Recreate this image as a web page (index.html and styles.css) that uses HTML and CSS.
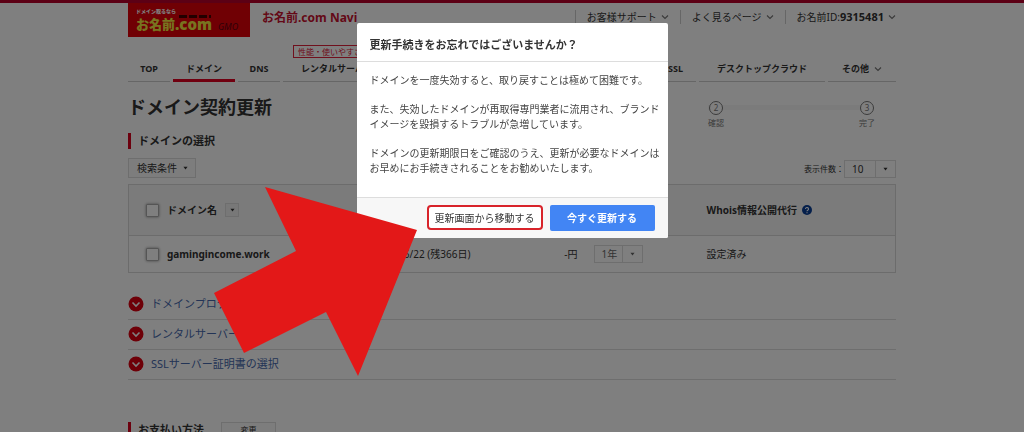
FILE: index.html
```html
<!DOCTYPE html>
<html lang="ja">
<head>
<meta charset="utf-8">
<title>お名前.com Navi</title>
<link rel="stylesheet" href="styles.css">
</head>
<body>
<svg class="sprite" width="0" height="0" aria-hidden="true">
  <symbol id="chevron" viewBox="0 0 8 6"><path d="M1 1.5 4 4.500 7 1.500" fill="none" stroke="currentColor" stroke-width="1.200"/></symbol>
  <symbol id="caret" viewBox="0 0 6 4"><path d="M.5.5h5L3 3.800z" fill="currentColor"/></symbol>
  <symbol id="disc" viewBox="0 0 16 16"><circle cx="8" cy="8" r="7.500" fill="#dc0010"/><path d="M4.500 6.500 8 10l3.500-3.500" fill="none" stroke="#fff" stroke-width="1.600"/></symbol>
</svg>

<div class="page">
  <header class="container header">
    <a class="logo" href="#">
      <span class="logo-tag">ドメイン取るなら</span>
      <span class="logo-row"><span class="logo-name">お名前</span><span class="logo-com">.com</span><span class="logo-gmo">GMO</span></span>
    </a>
    <span class="brand">お名前.com Navi</span>
    <div class="tools">
      <a href="#">お客様サポート<svg class="chevron"><use href="#chevron"/></svg></a>
      <a href="#">よく見るページ<svg class="chevron"><use href="#chevron"/></svg></a>
      <a href="#"><span>お名前ID:<b>9315481</b></span><svg class="chevron"><use href="#chevron"/></svg></a>
    </div>
  </header>

  <nav class="container nav">
    <a href="#">TOP</a>
    <a class="current" href="#">ドメイン</a>
    <a href="#">DNS</a>
    <a class="server" href="#"><span class="badge">性能・使いやすさ</span>レンタルサーバー</a>
    <a class="ssl" href="#">SSL</a>
    <a href="#">デスクトップクラウド</a>
    <a href="#">その他<svg class="chevron"><use href="#chevron"/></svg></a>
  </nav>

  <main class="container">
    <div class="title-row">
      <h1>ドメイン契約更新</h1>
      <ol class="steps">
        <li><span>2</span>確認</li>
        <li><span>3</span>完了</li>
      </ol>
    </div>

    <h2>ドメインの選択</h2>
    <div class="filter-row">
      <button class="filter" type="button">検索条件<svg class="caret"><use href="#caret"/></svg></button>
      <div class="count">
        <label for="count">表示件数：</label>
        <span class="select wide"><select id="count"><option>10</option></select><span class="arrow-cell"><svg class="caret"><use href="#caret"/></svg></span></span>
      </div>
    </div>

    <table>
      <colgroup><col class="c-name"><col class="c-date"><col class="c-price"><col class="c-term"><col></colgroup>
      <thead>
        <tr>
          <th><div class="cell"><input type="checkbox" aria-label="すべて選択">ドメイン名<button class="sort" type="button" aria-label="並べ替え"><svg class="caret"><use href="#caret"/></svg></button></div></th>
          <th></th><th></th><th></th>
          <th><div class="whois">Whois情報公開代行<svg class="help" viewBox="0 0 10 10"><circle cx="5" cy="5" r="5" fill="#0a3f96"/><path d="M3.500 4a1.500 1.500 0 1 1 2.200 1.300C5.200 5.600 5 5.800 5 6.300M5 7.200v1" fill="none" stroke="#fff" stroke-width="1.100"/></svg></div></th>
        </tr>
      </thead>
      <tbody>
        <tr>
          <td><div class="cell"><input type="checkbox" aria-label="gamingincome.workを選択"><b>gamingincome.work</b></div></td>
          <td>2020/06/22 (残366日)</td>
          <td class="price">-円</td>
          <td class="term"><span class="select"><select aria-label="更新年数"><option>1年</option></select><span class="arrow-cell"><svg class="caret"><use href="#caret"/></svg></span></span></td>
          <td>設定済み</td>
        </tr>
      </tbody>
    </table>

    <ul class="options">
      <li><a href="#"><svg class="disc"><use href="#disc"/></svg>ドメインプロテクション</a></li>
      <li><a href="#"><svg class="disc"><use href="#disc"/></svg>レンタルサーバーの選択</a></li>
      <li><a href="#"><svg class="disc"><use href="#disc"/></svg>SSLサーバー証明書の選択</a></li>
    </ul>

    <div class="payment">
      <h2>お支払い方法</h2>
      <button type="button">変更</button>
    </div>
  </main>
</div>

<div class="overlay">
  <section class="dialog" role="dialog" aria-modal="true" aria-labelledby="dialog-title">
    <h3 id="dialog-title">更新手続きをお忘れではございませんか？</h3>
    <div class="dialog-body">
      <p>ドメインを一度失効すると、取り戻すことは極めて困難です。</p>
      <p>また、失効したドメインが再取得専門業者に流用され、ブランド<br>イメージを毀損するトラブルが急増しています。</p>
      <p>ドメインの更新期限日をご確認のうえ、更新が必要なドメインは<br>お早めにお手続きされることをお勧めいたします。</p>
    </div>
    <footer>
      <button class="leave" type="button">更新画面から移動する</button>
      <button class="renew" type="button">今すぐ更新する</button>
    </footer>
  </section>
</div>

<svg class="pointer" viewBox="214 187 203 189" aria-hidden="true"><path d="M417 230 265 187l31 64-82 42 30 60 82-41 32 64z" fill="#e31818"/></svg>
</body>
</html>
```
FILE: styles.css
```css
* { box-sizing: border-box; }
body {
  margin: 0;
  height: 100vh;
  overflow: hidden;
  background: #fff;
  color: #333;
  font: 10px/16px "Noto Sans", "Noto Sans CJK JP", sans-serif;
}
a { color: inherit; text-decoration: none; }
button, select { font: inherit; color: inherit; }
h1, h2, h3, p, ul, ol { margin: 0; padding: 0; }
ul, ol { list-style: none; }
.sprite { position: absolute; }
.chevron { width: 8px; height: 6px; color: #777; }
.caret { width: 5px; height: 4px; }
.page { border-top: 3px solid #b8002a; }
.container { width: 75%; min-width: 768px; margin: 0 auto; }

/* header */
.header { display: flex; align-items: flex-start; height: 35px; }
.logo {
  display: flex;
  flex-direction: column;
  width: 122px;
  height: 34px;
  padding: 5px 8px 0;
  background: #e00008;
  font-weight: 900;
}
.logo-tag { color: #fff; font-size: 5px; line-height: 6px; }
.logo-row { display: flex; align-items: flex-end; line-height: 18px; white-space: nowrap; }
.logo-name { color: #f0e840; font-size: 13px; font-family: "Noto Sans CJK JP", sans-serif; }
.logo-com { padding-top: 1px; background: repeating-linear-gradient(90deg, #400 0 8px, transparent 8px 10px) 4px 1px / 32px 3px no-repeat; color: #f0e840; font-size: 15px; }
.logo-gmo { margin-left: 6px; color: #600010; font-size: 9px; line-height: 12px; font-style: italic; font-weight: 400; }
.brand { margin: 7px 0 0 12px; color: #c8102e; font-size: 12px; font-weight: 700; }
.tools { display: flex; margin: 7px 0 0 auto; }
.tools a { display: flex; align-items: center; gap: 4px; padding: 0 11px; border-left: 1px solid #ccc; line-height: 14px; }
.tools a:last-child { padding-right: 0; }
.tools b { font-size: 11px; }

/* navigation */
.nav {
  display: grid;
  grid-template-columns: 42px 62px 42px 118px 1fr 126px 68px;
  gap: 3px;
  height: 44px;
  align-items: end;
  font-size: 9px;
  font-weight: 700;
  text-align: center;
}
.nav a { display: block; height: 22px; border-bottom: 1px solid #ccc; line-height: 18px; }
.nav .current { border-bottom: 3px solid #e00020; }
.nav .server { height: 37px; padding-left: 18px; text-align: left; }
.nav .ssl { padding-right: 13px; text-align: right; }
.nav .chevron { margin-left: 5px; }
.badge { display: block; width: 90px; margin: 0 0 2px -8px; padding-left: 4px; border: 1px solid #e0203a; color: #e0203a; font-size: 8px; line-height: 11px; font-weight: 400; }

/* title and steps */
.title-row { display: flex; justify-content: space-between; padding-top: 15px; height: 51px; }
h1 { font-size: 18px; line-height: 20px; }
.steps { display: flex; justify-content: space-between; width: 188px; padding: 4px 21px 0 0; background: linear-gradient(#f6f6f6, #f6f6f6) 0 8px / 160px 5px no-repeat; color: #777; font-size: 8px; line-height: 10px; }
.steps li { display: flex; flex-direction: column; align-items: center; gap: 3px; }
.steps span { width: 14px; height: 14px; border: 1px solid #777; border-radius: 50%; background: #fff; line-height: 12px; text-align: center; }
h2 { padding-left: 7px; border-left: 3px solid #d8001c; font-size: 11px; line-height: 16px; }

/* filters */
.filter-row { display: flex; justify-content: space-between; align-items: flex-start; margin: 9px 0 6px; }
.filter { display: flex; align-items: center; gap: 6px; height: 20px; padding: 0 7px 0 8px; border: 1px solid #ddd; background: #fafafa; }
.count { display: flex; align-items: center; padding-top: 2px; font-size: 8px; }
.select { display: inline-flex; width: 49px; height: 18px; border: 1px solid #ddd; font-size: 10px; color: #666; }
.select.wide { width: 52px; color: #333; }
.select select { flex: 1; min-width: 0; padding: 0 0 0 7px; border: 0; background: none; appearance: none; }
.arrow-cell { display: flex; width: 20px; align-items: center; justify-content: center; border-left: 1px solid #ddd; }

/* table */
table { width: 100%; border: 1px solid #d8d8d8; border-collapse: collapse; table-layout: fixed; }
.c-name { width: 243px; }
.c-date { width: 140px; }
.c-price { width: 66px; }
.c-term { width: 129px; }
tr { border-bottom: 1px solid #d8d8d8; }
th, td { padding: 0; text-align: left; }
th { height: 51px; background: #f7f7f7; }
td { height: 37px; }
.cell { display: flex; align-items: center; padding-left: 17px; }
.cell input { width: 13px; height: 13px; margin: 0 8px 0 0; border: 1px solid #aaa; border-radius: 1px; background: #fff; box-shadow: 0 0 3px #888; appearance: none; }
.sort { display: flex; align-items: center; justify-content: center; width: 14px; height: 14px; margin-left: 8px; padding: 0; border: 1px solid #ddd; background: #f0f0f0; }
.whois { display: flex; align-items: center; gap: 5px; }
.help { width: 10px; height: 10px; }
.price { text-align: right; }
.term { padding-left: 16px; }
.term .select { vertical-align: middle; }

/* options */
.options { margin-top: 17px; }
.options li { height: 30px; border-bottom: 1px solid #ddd; }
.options a { display: flex; align-items: center; gap: 7px; height: 28px; color: #4668ac; font-size: 11px; }
.disc { width: 16px; height: 16px; }
.payment { display: flex; gap: 17px; padding-top: 42px; }
.payment button { width: 55px; height: 16px; padding: 0; border: 1px solid #ddd; background: #fafafa; font-size: 8px; line-height: 12px; }

/* dialog */
.overlay { position: fixed; inset: 0; display: flex; align-items: flex-start; justify-content: center; padding-top: 23px; background: rgba(0, 0, 0, .5); }
.dialog { width: 311px; border-radius: 2px; overflow: hidden; background: #fff; }
.dialog h3 { padding: 14px 13px 8px; border-bottom: 1px solid #ddd; font-size: 11px; line-height: 16px; }
.dialog-body { padding: 11px 0 21px 13px; line-height: 15px; white-space: nowrap; color: #444; }
.dialog-body p + p { margin-top: 14px; }
.dialog footer { display: flex; justify-content: flex-end; gap: 7px; padding: 7px 13px 7px 12px; border-top: 1px solid #ddd; background: #f7f7f7; }
.leave { width: 116px; height: 25px; padding: 0; border: 2px solid #d8232a; border-radius: 4px; background: #fff; white-space: nowrap; }
.renew { width: 105px; height: 26px; padding: 0; border: 0; border-radius: 2px; background: #4285f4; color: #fff; font-weight: 700; }

/* annotation drawn over the dialog */
.pointer { position: absolute; left: calc(50% - 298px); top: 187px; width: 203px; height: 189px; pointer-events: none; }
```
